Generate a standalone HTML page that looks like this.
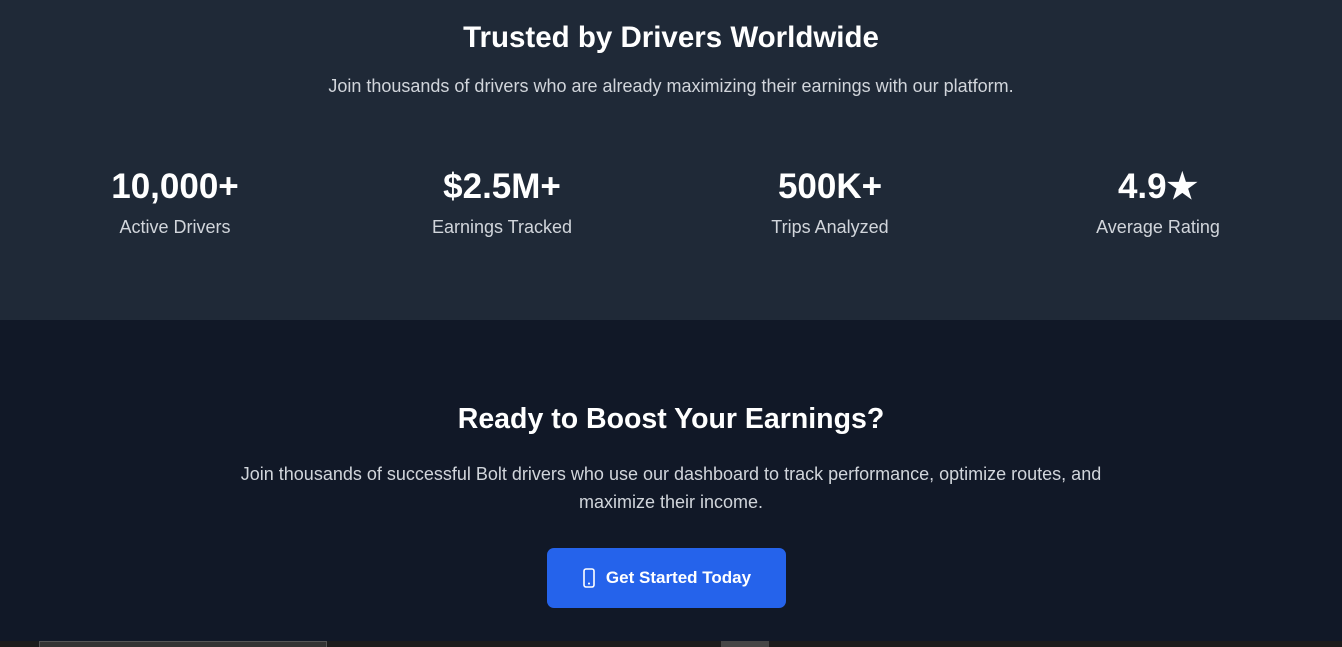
<!DOCTYPE html>
<html><head><style>
*{margin:0;padding:0;box-sizing:border-box}
body{width:1342px;height:647px;overflow:hidden;font-family:"Liberation Sans",sans-serif;color:#fff;background:#111827;position:relative}
.top{position:absolute;top:0;left:0;width:1342px;height:320px;background:#1f2937}
h2{position:absolute;width:100%;text-align:center;font-size:30px;font-weight:bold}
.sub{position:absolute;width:100%;text-align:center;font-size:18px;color:#d1d5db}
.stat{position:absolute;top:166px;width:300px;text-align:center}
.stat b{display:block;font-size:35px;line-height:42px}
.stat span{display:block;font-size:18px;color:#d1d5db;margin-top:9px}
.btn{position:absolute;left:547px;top:548px;width:239px;height:60px;background:#2563eb;border-radius:7px;display:flex;align-items:center;justify-content:center;font-weight:bold;font-size:17px;gap:10px}
.strip{position:absolute;left:0;top:641px;width:1342px;height:6px;background:#1c1c1c}
</style></head><body>
<div class="top"></div>
<h2 style="top:21px;font-size:29.5px">Trusted by Drivers Worldwide</h2>
<div class="sub" style="top:76px">Join thousands of drivers who are already maximizing their earnings with our platform.</div>
<div class="stat" style="left:25px"><b>10,000+</b><span>Active Drivers</span></div>
<div class="stat" style="left:352px"><b>$2.5M+</b><span>Earnings Tracked</span></div>
<div class="stat" style="left:680px"><b>500K+</b><span>Trips Analyzed</span></div>
<div class="stat" style="left:1008px"><b>4.9★</b><span>Average Rating</span></div>
<h2 style="top:403px;font-size:28.5px">Ready to Boost Your Earnings?</h2>
<div class="sub" style="top:460px;line-height:28px;left:231px;width:880px">Join thousands of successful Bolt drivers who use our dashboard to track performance, optimize routes, and maximize their income.</div>
<div class="btn"><svg width="14" height="20" viewBox="0 0 14 20" fill="none" stroke="#fff" stroke-width="1.6"><rect x="2" y="1" width="10" height="18" rx="2"/><line x1="7" y1="15.5" x2="7" y2="15.6" stroke-linecap="round" stroke-width="2"/></svg>Get Started Today</div>
<div class="strip"><div style="position:absolute;left:39px;top:0;width:288px;height:6px;background:#333;border:1px solid #555;border-bottom:none"></div><div style="position:absolute;left:721px;top:0;width:48px;height:6px;background:#454545"></div></div>
</body></html>
